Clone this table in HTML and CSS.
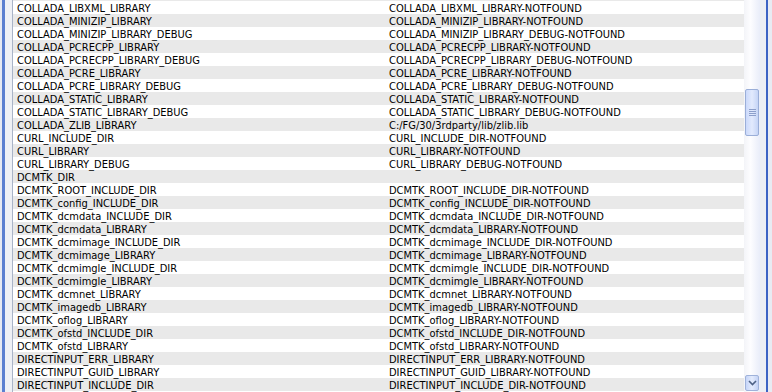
FILE: index.html
```html
<!DOCTYPE html>
<html>
<head>
<meta charset="utf-8">
<link rel="stylesheet" href="styles.css">
</head>
<body>
<div class="window">
  <div class="edge-left"><div class="edge-light"></div><div class="edge-blue"></div><div class="edge-face"></div><div class="edge-line"></div></div>
  <div class="table">
    <div class="row partial"></div>
    <div class="row"><div class="cell name">COLLADA_LIBXML_LIBRARY</div><div class="cell value">COLLADA_LIBXML_LIBRARY-NOTFOUND</div></div>
    <div class="row"><div class="cell name">COLLADA_MINIZIP_LIBRARY</div><div class="cell value">COLLADA_MINIZIP_LIBRARY-NOTFOUND</div></div>
    <div class="row"><div class="cell name">COLLADA_MINIZIP_LIBRARY_DEBUG</div><div class="cell value">COLLADA_MINIZIP_LIBRARY_DEBUG-NOTFOUND</div></div>
    <div class="row"><div class="cell name">COLLADA_PCRECPP_LIBRARY</div><div class="cell value">COLLADA_PCRECPP_LIBRARY-NOTFOUND</div></div>
    <div class="row"><div class="cell name">COLLADA_PCRECPP_LIBRARY_DEBUG</div><div class="cell value">COLLADA_PCRECPP_LIBRARY_DEBUG-NOTFOUND</div></div>
    <div class="row"><div class="cell name">COLLADA_PCRE_LIBRARY</div><div class="cell value">COLLADA_PCRE_LIBRARY-NOTFOUND</div></div>
    <div class="row"><div class="cell name">COLLADA_PCRE_LIBRARY_DEBUG</div><div class="cell value">COLLADA_PCRE_LIBRARY_DEBUG-NOTFOUND</div></div>
    <div class="row"><div class="cell name">COLLADA_STATIC_LIBRARY</div><div class="cell value">COLLADA_STATIC_LIBRARY-NOTFOUND</div></div>
    <div class="row"><div class="cell name">COLLADA_STATIC_LIBRARY_DEBUG</div><div class="cell value">COLLADA_STATIC_LIBRARY_DEBUG-NOTFOUND</div></div>
    <div class="row"><div class="cell name">COLLADA_ZLIB_LIBRARY</div><div class="cell value">C:/FG/30/3rdparty/lib/zlib.lib</div></div>
    <div class="row"><div class="cell name">CURL_INCLUDE_DIR</div><div class="cell value">CURL_INCLUDE_DIR-NOTFOUND</div></div>
    <div class="row"><div class="cell name">CURL_LIBRARY</div><div class="cell value">CURL_LIBRARY-NOTFOUND</div></div>
    <div class="row"><div class="cell name">CURL_LIBRARY_DEBUG</div><div class="cell value">CURL_LIBRARY_DEBUG-NOTFOUND</div></div>
    <div class="row"><div class="cell name">DCMTK_DIR</div><div class="cell value"></div></div>
    <div class="row"><div class="cell name">DCMTK_ROOT_INCLUDE_DIR</div><div class="cell value">DCMTK_ROOT_INCLUDE_DIR-NOTFOUND</div></div>
    <div class="row"><div class="cell name">DCMTK_config_INCLUDE_DIR</div><div class="cell value">DCMTK_config_INCLUDE_DIR-NOTFOUND</div></div>
    <div class="row"><div class="cell name">DCMTK_dcmdata_INCLUDE_DIR</div><div class="cell value">DCMTK_dcmdata_INCLUDE_DIR-NOTFOUND</div></div>
    <div class="row"><div class="cell name">DCMTK_dcmdata_LIBRARY</div><div class="cell value">DCMTK_dcmdata_LIBRARY-NOTFOUND</div></div>
    <div class="row"><div class="cell name">DCMTK_dcmimage_INCLUDE_DIR</div><div class="cell value">DCMTK_dcmimage_INCLUDE_DIR-NOTFOUND</div></div>
    <div class="row"><div class="cell name">DCMTK_dcmimage_LIBRARY</div><div class="cell value">DCMTK_dcmimage_LIBRARY-NOTFOUND</div></div>
    <div class="row"><div class="cell name">DCMTK_dcmimgle_INCLUDE_DIR</div><div class="cell value">DCMTK_dcmimgle_INCLUDE_DIR-NOTFOUND</div></div>
    <div class="row"><div class="cell name">DCMTK_dcmimgle_LIBRARY</div><div class="cell value">DCMTK_dcmimgle_LIBRARY-NOTFOUND</div></div>
    <div class="row"><div class="cell name">DCMTK_dcmnet_LIBRARY</div><div class="cell value">DCMTK_dcmnet_LIBRARY-NOTFOUND</div></div>
    <div class="row"><div class="cell name">DCMTK_imagedb_LIBRARY</div><div class="cell value">DCMTK_imagedb_LIBRARY-NOTFOUND</div></div>
    <div class="row"><div class="cell name">DCMTK_oflog_LIBRARY</div><div class="cell value">DCMTK_oflog_LIBRARY-NOTFOUND</div></div>
    <div class="row"><div class="cell name">DCMTK_ofstd_INCLUDE_DIR</div><div class="cell value">DCMTK_ofstd_INCLUDE_DIR-NOTFOUND</div></div>
    <div class="row"><div class="cell name">DCMTK_ofstd_LIBRARY</div><div class="cell value">DCMTK_ofstd_LIBRARY-NOTFOUND</div></div>
    <div class="row"><div class="cell name">DIRECTINPUT_ERR_LIBRARY</div><div class="cell value">DIRECTINPUT_ERR_LIBRARY-NOTFOUND</div></div>
    <div class="row"><div class="cell name">DIRECTINPUT_GUID_LIBRARY</div><div class="cell value">DIRECTINPUT_GUID_LIBRARY-NOTFOUND</div></div>
    <div class="row"><div class="cell name">DIRECTINPUT_INCLUDE_DIR</div><div class="cell value">DIRECTINPUT_INCLUDE_DIR-NOTFOUND</div></div>
    <div class="row"></div>
  </div>
  <div class="scrollbar">
    <div class="track-top"></div>
    <div class="thumb"><div class="grip"><span></span><span></span><span></span><span></span></div></div>
    <div class="track-bottom"></div>
    <div class="arrow-btn">
      <svg width="9" height="6" viewBox="0 0 9 6"><path d="M1 1 L4.5 4.5 L8 1" fill="none" stroke="#4d6185" stroke-width="1.6"/></svg>
    </div>
  </div>
  <div class="edge-right"><div class="edge-face2"></div><div class="edge-blue2"></div><div class="edge-light2"></div></div>
</div>
</body>
</html>
```

FILE: styles.css
```css
html, body {
  margin: 0;
  padding: 0;
  background: #ffffff;
}
body {
  width: 772px;
  height: 392px;
  overflow: hidden;
  font-family: "DejaVu Sans Condensed", "DejaVu Sans", sans-serif;
  font-stretch: condensed;
  font-size: 11px;
  color: #000;
}
.window {
  display: flex;
  height: 392px;
  overflow: hidden;
}
.edge-left {
  display: flex;
  width: 13px;
  flex: none;
}
.edge-light { width: 2px; background: #e6e9f2; }
.edge-blue { width: 3px; background: #5b7fd0; }
.edge-face { width: 7px; background: #eef0f5; }
.edge-line { width: 1px; background: #a9b4c8; }
.table {
  flex: none;
  width: 731px;
  display: block;
  overflow: hidden;
}
.row {
  display: flex;
  height: 13px;
  background: #ffffff;
}
.row:nth-child(odd) {
  background: #e9e9e9;
}
.row.partial {
  height: 1px;
}
.cell {
  box-sizing: border-box;
  height: 13px;
  padding-top: 2px;
  line-height: 12px;
  padding-left: 4px;
  white-space: nowrap;
}
.name { width: 372px; flex: none; }
.value { flex: 1; }
.scrollbar {
  flex: none;
  width: 16px;
  display: flex;
  flex-direction: column;
  background: linear-gradient(to right, #f3f4f8, #fdfdff 40%, #e9edf9);
}
.track-top { height: 89px; flex: none; }
.thumb {
  flex: none;
  height: 47px;
  margin: 0 1px;
  box-sizing: border-box;
  border: 1px solid #9aaed8;
  border-radius: 2px;
  background: linear-gradient(to right, #cbd9fb, #e2eafd 50%, #c5d4f6);
  display: flex;
  align-items: center;
  justify-content: center;
}
.grip {
  display: flex;
  flex-direction: column;
  gap: 1px;
}
.grip span {
  display: block;
  width: 7px;
  height: 1px;
  background: #8c9fcb;
}
.track-bottom { flex: 1; }
.arrow-btn {
  flex: none;
  height: 16px;
  margin: 0 1px 1px 1px;
  box-sizing: border-box;
  border: 1px solid #9fb2da;
  border-radius: 2px;
  background: linear-gradient(to right, #c6d5f8, #e4ecfd 50%, #c3d2f5);
  display: flex;
  align-items: center;
  justify-content: center;
}
.edge-right {
  display: flex;
  flex: none;
  width: 12px;
}
.edge-face2 { width: 6px; background: #eceef4; }
.edge-blue2 { width: 2px; background: #3c63c4; }
.edge-light2 { width: 4px; background: #e8ebf3; }
```
